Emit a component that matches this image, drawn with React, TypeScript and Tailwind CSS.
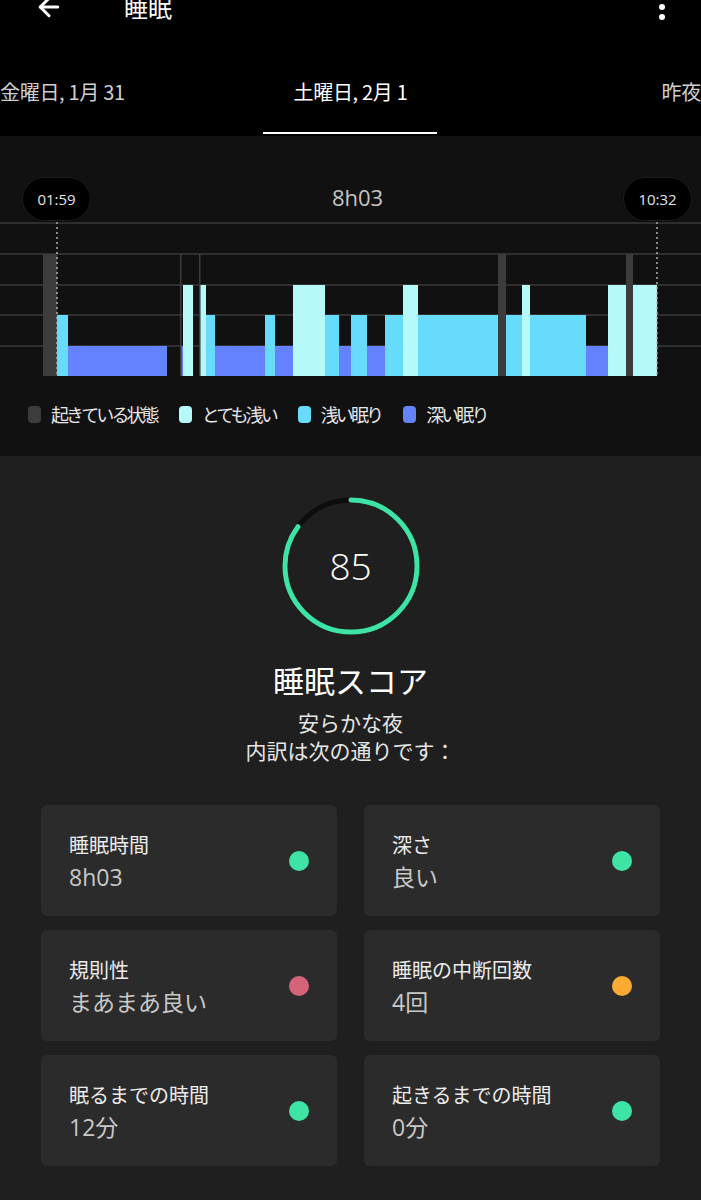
import React from 'react';
import { ArrowLeft } from 'lucide-react';

const font = { fontFamily: '"Noto Sans CJK JP", "Noto Sans", sans-serif' };
const numFont = { fontFamily: '"Open Sans", "Noto Sans CJK JP", sans-serif' };

const AWAKE = '#3c3c3c';
const VLIGHT = '#b6f9f9';
const LIGHT = '#67dbfc';
const DEEP = '#6482fd';

// svg top = 222 on the page; levels: awake 32, very light 63, light 93, deep 124; bottom 154
const levelTop: Record<string, number> = { a: 32, v: 63, l: 93, d: 124 };
const levelColor: Record<string, string> = { a: AWAKE, v: VLIGHT, l: LIGHT, d: DEEP };

const segments: [string, number, number][] = [
  ['a', 43, 57],
  ['l', 57, 68],
  ['d', 68, 167],
  ['a', 180, 181.5],
  ['d', 181.5, 183],
  ['v', 183, 193],
  ['a', 199, 200.5],
  ['v', 200.5, 206],
  ['l', 206, 215],
  ['d', 215, 265],
  ['l', 265, 275],
  ['d', 275, 293],
  ['v', 293, 325],
  ['l', 325, 339],
  ['d', 339, 351],
  ['l', 351, 367],
  ['d', 367, 385],
  ['l', 385, 403],
  ['v', 403, 418],
  ['l', 418, 498],
  ['a', 498, 506],
  ['l', 506, 522],
  ['v', 522, 530],
  ['l', 530, 586],
  ['d', 586, 608],
  ['v', 608, 626],
  ['a', 626, 633],
  ['v', 633, 657],
];

const gridLines = [1, 32, 63, 93, 124];

const legend = [
  { color: 'bg-[#3c3c3c]', label: '起きている状態' },
  { color: 'bg-[#b6f9f9]', label: 'とても浅い' },
  { color: 'bg-[#67dbfc]', label: '浅い眠り' },
  { color: 'bg-[#6482fd]', label: '深い眠り' },
];

const cards = [
  { label: '睡眠時間', value: '8h03', dot: 'bg-[#3ee4a6]' },
  { label: '深さ', value: '良い', dot: 'bg-[#3ee4a6]' },
  { label: '規則性', value: 'まあまあ良い', dot: 'bg-[#d5647a]' },
  { label: '睡眠の中断回数', value: '4回', dot: 'bg-[#fbab33]' },
  { label: '眠るまでの時間', value: '12分', dot: 'bg-[#3ee4a6]' },
  { label: '起きるまでの時間', value: '0分', dot: 'bg-[#3ee4a6]' },
];

const SleepChart = () => (
  <svg width="701" height="154" className="block">
    {gridLines.map((y) => (
      <line key={y} x1="0" x2="701" y1={y} y2={y} stroke="#3a3a3a" strokeWidth="1.5" />
    ))}
    {segments.map(([lvl, x1, x2], i) => (
      <rect key={i} x={x1} y={levelTop[lvl]} width={x2 - x1} height={154 - levelTop[lvl]} fill={levelColor[lvl]} />
    ))}
    <line x1="57" x2="57" y1="0" y2="154" stroke="#b0b0b0" strokeWidth="1.5" strokeDasharray="2 3" />
    <line x1="657" x2="657" y1="0" y2="154" stroke="#b0b0b0" strokeWidth="1.5" strokeDasharray="2 3" />
  </svg>
);

const TimePill = ({ text, left }: { text: string; left: string }) => (
  <div
    className={`absolute top-[42px] ${left} w-[67px] h-[42px] rounded-full bg-black flex items-center justify-center text-[15px] font-medium text-[#e4e4e4] shadow-[0_1px_3px_rgba(0,0,0,0.6)] ring-1 ring-[#1c1c1c]`}
    style={numFont}
  >
    {text}
  </div>
);

const ScoreRing = () => {
  const r = 66;
  const c = 2 * Math.PI * r;
  return (
    <div className="relative w-[140px] h-[140px]">
      <svg width="140" height="140" className="absolute inset-0">
        <circle cx="70" cy="70" r={r} fill="none" stroke="#0d0d0d" strokeWidth="5" />
        <circle
          cx="70"
          cy="70"
          r={r}
          fill="none"
          stroke="#3ee4a6"
          strokeWidth="5"
          strokeLinecap="round"
          strokeDasharray={`${c * 0.85} ${c}`}
          transform="rotate(-90 70 70)"
        />
      </svg>
      <div className="absolute inset-0 flex items-center justify-center text-[37px] font-light text-white" style={numFont}>
        85
      </div>
    </div>
  );
};

export default function App() {
  return (
    <div className="w-[701px] min-h-[1200px] bg-[#1f1f1f] overflow-hidden" style={font}>
      {/* header */}
      <header className="h-[136px] bg-black overflow-hidden">
        <div className="-mt-[11px] h-[36px] flex items-center pl-[34px] pr-[35px] text-white">
          <ArrowLeft size={30} strokeWidth={2.4} />
          <span className="ml-[60px] text-[24px]">睡眠</span>
          <svg width="8" height="36" className="ml-auto" viewBox="0 0 8 36">
            <circle cx="4" cy="8" r="3" fill="white" />
            <circle cx="4" cy="18" r="3" fill="white" />
            <circle cx="4" cy="28" r="3" fill="white" />
          </svg>
        </div>
        <div className="mt-[47px] h-[40px] grid grid-cols-[1fr_auto_1fr] items-center text-[20px] tracking-[-0.3px]">
          <span className="text-[#cfcfcf] justify-self-start">金曜日, 1月 31</span>
          <span className="text-white">土曜日, 2月 1</span>
          <span className="text-[#cfcfcf] justify-self-end">昨夜</span>
        </div>
        <div className="mt-[20px] ml-[263px] w-[174px] h-[2px] bg-white" />
      </header>

      {/* chart */}
      <section className="relative h-[320px] bg-[#111111]">
        <div className="pt-[46px] h-[76px] flex justify-center pl-[14px]">
          <span className="leading-[30px] text-[22px] text-[#c4c4c4]" style={numFont}>
            8h03
          </span>
        </div>
        <TimePill text="01:59" left="left-[23px]" />
        <TimePill text="10:32" left="left-[624px]" />
        <div className="mt-[10px]">
          <SleepChart />
        </div>
        <div className="mt-[26px] h-[24px] flex items-center pl-[28px] gap-[22px]">
          {legend.map((l) => (
            <div key={l.label} className="flex items-center gap-[10px]">
              <span className={`w-[13px] h-[17px] rounded-[4px] ${l.color}`} />
              <span className="text-[18px] tracking-[-2.9px] text-[#e6e6e6]">{l.label}</span>
            </div>
          ))}
        </div>
      </section>

      {/* score */}
      <section className="flex flex-col items-center">
        <div className="mt-[40px]">
          <ScoreRing />
        </div>
        <h1 className="mt-[24px] text-[31px] leading-[40px] text-white">睡眠スコア</h1>
        <div className="mt-[8px] text-[21px] leading-[28px] text-[#e6e6e6] text-center">
          <p>安らかな夜</p>
          <p>内訳は次の通りです：</p>
        </div>
      </section>

      {/* breakdown cards */}
      <section className="mt-[41px] px-[41px] grid grid-cols-2 gap-x-[27px] gap-y-[14px]">
        {cards.map((c) => (
          <div key={c.label} className="h-[111px] rounded-[6px] bg-[#2b2b2b] flex items-center justify-between pl-[28px] pr-[28px]">
            <div className="pt-[2px]">
              <div className="text-[20px] leading-[30px] text-[#ececec]">{c.label}</div>
              <div className="text-[23px] leading-[34px] text-[#c8c8c8]" style={numFont}>
                {c.value}
              </div>
            </div>
            <span className={`w-[20px] h-[20px] rounded-full ${c.dot}`} />
          </div>
        ))}
      </section>
    </div>
  );
}
